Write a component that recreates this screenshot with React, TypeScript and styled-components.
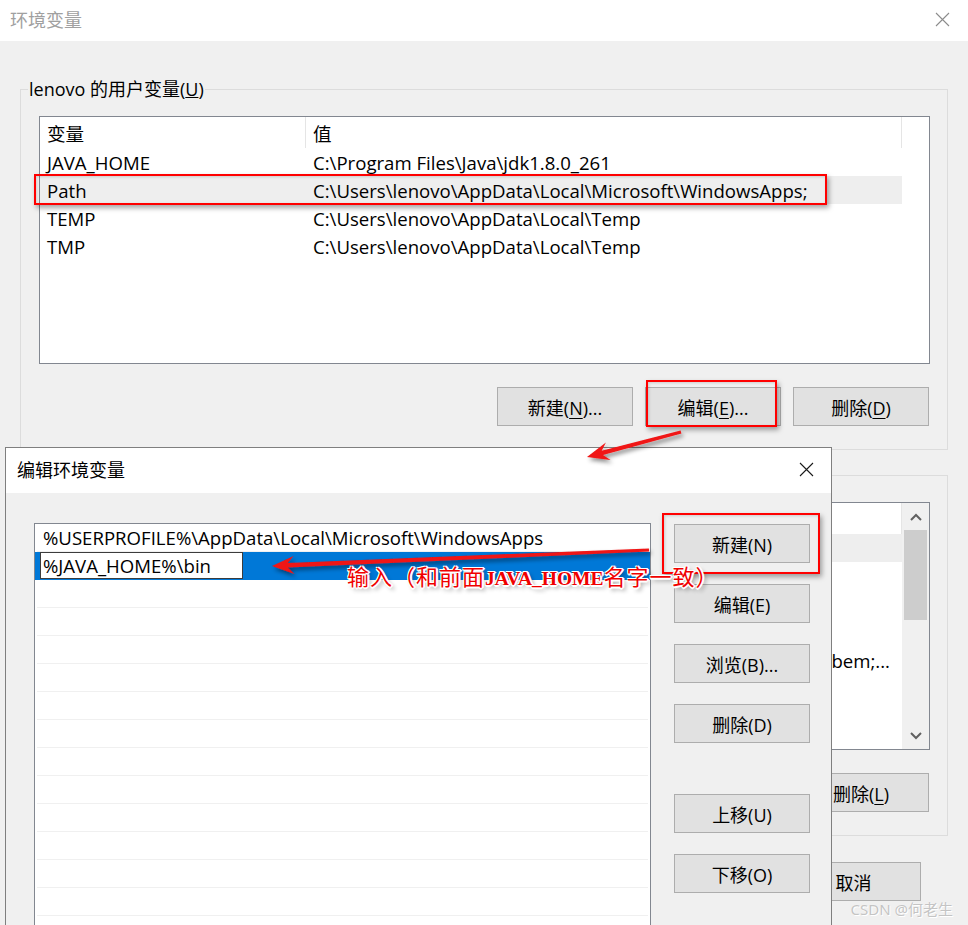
import styled, { createGlobalStyle } from 'styled-components';

const GlobalStyle = createGlobalStyle`
  html, body {
    margin: 0;
    padding: 0;
  }
  body {
    background: #f0f0f0;
    font-family: "Open Sans", "Noto Sans CJK SC", sans-serif;
    color: #000;
  }
`;

type Row = { name: string; value: string; selected?: boolean; alignEnd?: boolean };

const userVars: Row[] = [
  { name: 'JAVA_HOME', value: 'C:\\Program Files\\Java\\jdk1.8.0_261' },
  { name: 'Path', value: 'C:\\Users\\lenovo\\AppData\\Local\\Microsoft\\WindowsApps;', selected: true },
  { name: 'TEMP', value: 'C:\\Users\\lenovo\\AppData\\Local\\Temp' },
  { name: 'TMP', value: 'C:\\Users\\lenovo\\AppData\\Local\\Temp' },
];

const systemVars: Row[] = [
  { name: 'ComSpec', value: 'C:\\Windows\\system32\\cmd.exe', selected: true },
  { name: 'DriverData', value: 'C:\\Windows\\System32\\Drivers\\DriverData' },
  { name: 'NUMBER_OF_PROCESSORS', value: '8' },
  { name: 'OS', value: 'Windows_NT' },
  { name: 'Path', value: 'C:\\Windows\\system32;C:\\Windows;C:\\Windows\\System32\\Wbem;...', alignEnd: true },
  { name: 'PATHEXT', value: '.COM;.EXE;.BAT;.CMD;.VBS;.VBE;.JS;.JSE;.WSF;.WSH;.MSC' },
  { name: 'PROCESSOR_ARCHITECTURE', value: 'AMD64' },
  { name: 'PROCESSOR_IDENTIFIER', value: 'Intel64 Family 6 Model 142 Stepping 10' },
];

const pathEntries = ['%USERPROFILE%\\AppData\\Local\\Microsoft\\WindowsApps'];

const Page = styled.div`
  position: relative;
  width: 968px;
  height: 925px;
  overflow: hidden;
  font-size: 18.6px;
`;

const Window = styled.div`
  display: flex;
  flex-direction: column;
  height: 100%;
`;

const TitleBar = styled.div<{ $height: number; $left: number; $right: number; $inactive?: boolean }>`
  flex: none;
  height: ${(p) => p.$height}px;
  box-sizing: border-box;
  display: flex;
  align-items: center;
  justify-content: space-between;
  padding: 0 ${(p) => p.$right}px 3px ${(p) => p.$left}px;
  background: #fff;
  color: ${(p) => (p.$inactive ? '#a0a0a0' : '#000')};
  font-size: 18px;
`;

const CloseIcon = ({ color }: { color: string }) => (
  <svg width="15" height="15" viewBox="0 0 15 15">
    <path d="M1 1 L14 14 M14 1 L1 14" stroke={color} strokeWidth="1.1" fill="none" />
  </svg>
);

const Body = styled.div`
  flex: 1;
  display: flex;
  flex-direction: column;
  padding: 0 20px;
`;

const GroupBox = styled.div<{ $top: number }>`
  position: relative;
  margin-top: ${(p) => p.$top}px;
  border: 1px solid #dcdcdc;
  padding: 26px 17px 23px 18px;
  display: flex;
  flex-direction: column;
  gap: 23px;
`;

const Legend = styled.span`
  position: absolute;
  top: -13px;
  left: 7px;
  padding: 0 1px;
  background: #f0f0f0;
  line-height: 24px;
  font-size: 18px;
`;

const ListBox = styled.div`
  height: 248px;
  box-sizing: border-box;
  border: 1px solid #828790;
  background: #fff;
  display: flex;
  overflow: hidden;
`;

const Columns = styled.div`
  flex: 1;
  display: flex;
  flex-direction: column;
  min-width: 0;
`;

const HeaderRow = styled.div`
  display: grid;
  grid-template-columns: 266px 596px 1fr;
  height: 31px;
  flex: none;
`;

const HeaderCell = styled.div<{ $divider?: boolean }>`
  display: flex;
  align-items: center;
  padding-left: 7px;
  border-right: ${(p) => (p.$divider ? '1px solid #e5e5e5' : 'none')};
`;

const DataRow = styled.div<{ $selected?: boolean }>`
  display: grid;
  grid-template-columns: 266px 596px;
  width: 862px;
  height: 28px;
  flex: none;
  background: ${(p) => (p.$selected ? '#eeeeee' : 'transparent')};
`;

const Cell = styled.div<{ $alignEnd?: boolean }>`
  display: flex;
  align-items: center;
  justify-content: ${(p) => (p.$alignEnd ? 'flex-end' : 'flex-start')};
  padding: 0 ${(p) => (p.$alignEnd ? '12px' : '0')} 0 7px;
  white-space: nowrap;
  overflow: hidden;
`;

const ScrollBar = styled.div`
  width: 27px;
  flex: none;
  display: flex;
  flex-direction: column;
  align-items: center;
  background: #f0f0f0;
`;

const ScrollArrow = styled.div`
  height: 27px;
  width: 100%;
  display: flex;
  align-items: center;
  justify-content: center;
  flex: none;
`;

const ScrollThumb = styled.div`
  width: 23px;
  height: 90px;
  background: #cdcdcd;
  flex: none;
`;

const ScrollTrack = styled.div`
  flex: 1;
`;

const Chevron = ({ up }: { up?: boolean }) => (
  <svg width="12" height="8" viewBox="0 0 12 8">
    <path
      d={up ? 'M1 7 L6 2 L11 7' : 'M1 1 L6 6 L11 1'}
      stroke="#606060"
      strokeWidth="2"
      fill="none"
    />
  </svg>
);

const ButtonRow = styled.div<{ $right?: number }>`
  display: flex;
  justify-content: flex-end;
  gap: 12px;
  padding-right: ${(p) => p.$right ?? 1}px;
`;

const Button = styled.button<{ $width?: number }>`
  width: ${(p) => p.$width ?? 136}px;
  height: 39px;
  box-sizing: border-box;
  padding: 0;
  border: 1px solid #adadad;
  background: #e1e1e1;
  color: #000;
  font-family: inherit;
  font-size: 18px;
  flex: none;

  & u {
    text-decoration-thickness: 1px;
    text-underline-offset: 3px;
  }
`;

const Footer = styled(ButtonRow)`
  margin-top: 26px;
`;

const EditDialog = styled.div`
  position: absolute;
  left: 5px;
  top: 447px;
  width: 827px;
  height: 520px;
  box-sizing: border-box;
  border: 1px solid #7f7f7f;
  background: #f0f0f0;
  display: flex;
  flex-direction: column;
`;

const EditBody = styled.div`
  display: flex;
  gap: 23px;
  padding: 30px 21px 0 28px;
`;

const EditList = styled.div`
  width: 617px;
  height: 440px;
  box-sizing: border-box;
  border: 1px solid #828790;
  background: #fff;
  display: flex;
  flex-direction: column;
  flex: none;
`;

const EditRow = styled.div<{ $selected?: boolean }>`
  height: 28px;
  box-sizing: border-box;
  flex: none;
  display: flex;
  align-items: center;
  margin: 0 ${(p) => (p.$selected ? 0 : 2)}px;
  padding-left: ${(p) => (p.$selected ? 5 : 6)}px;
  background: ${(p) => (p.$selected ? '#0078d7' : 'transparent')};
  border-bottom: 1px solid ${(p) => (p.$selected ? '#0078d7' : '#f0f0f0')};
  white-space: nowrap;
`;

const EditInput = styled.input`
  width: 203px;
  height: 27px;
  box-sizing: border-box;
  margin: 0;
  border: 1px solid #3c3c3c;
  padding: 0 0 0 2px;
  background: #fff;
  font-family: inherit;
  font-size: 18.6px;
  color: #000;
  outline: none;
`;

const ButtonColumn = styled.div`
  display: flex;
  flex-direction: column;
  gap: 51px;
  padding-top: 1px;
`;

const ButtonStack = styled.div`
  display: flex;
  flex-direction: column;
  gap: 21px;
`;

const RedBox = styled.div<{ $x: number; $y: number; $w: number; $h: number }>`
  position: absolute;
  left: ${(p) => p.$x}px;
  top: ${(p) => p.$y}px;
  width: ${(p) => p.$w}px;
  height: ${(p) => p.$h}px;
  box-sizing: border-box;
  border: 2.5px solid #ff0000;
  box-shadow: 2px 3px 5px rgba(0, 0, 0, 0.35), inset 1px 1px 3px rgba(0, 0, 0, 0.15);
  pointer-events: none;
`;

const ArrowLayer = styled.svg`
  position: absolute;
  left: 0;
  top: 0;
  width: 968px;
  height: 925px;
  pointer-events: none;
`;

const Note = styled.div`
  position: absolute;
  left: 347px;
  top: 560px;
  font-family: "Noto Sans CJK SC", sans-serif;
  font-size: 22px;
  line-height: 30px;
  letter-spacing: 1px;
  color: #f00000;
  white-space: nowrap;
  text-shadow: 1px 1px 0 #fff, -1px -1px 0 #fff, 1px -1px 0 #fff, -1px 1px 0 #fff, 0 2px 0 #fff,
    2px 0 0 #fff, 3px 3px 4px rgba(0, 0, 0, 0.45);

  & b {
    font-family: "Liberation Serif", "DejaVu Serif", serif;
    font-weight: 700;
    font-size: 19.5px;
    letter-spacing: 0;
  }
`;

const Watermark = styled.div`
  position: absolute;
  right: 15px;
  bottom: 6px;
  font-family: "Noto Sans", "Noto Sans CJK SC", sans-serif;
  font-size: 15px;
  color: #c4c4c4;
  text-shadow: 0 0 1px #fff, 1px 1px 0 #fff;
  white-space: nowrap;
`;

// barbed arrow polygon from tail to tip
const arrowPoints = (x1: number, y1: number, x2: number, y2: number) => {
  const len = Math.hypot(x2 - x1, y2 - y1);
  const ux = (x2 - x1) / len;
  const uy = (y2 - y1) / len;
  const px = -uy;
  const py = ux;
  const head = 22;
  const half = 9;
  const shaft = 2.2;
  const tail = 1.6;
  const bx = x2 - ux * head;
  const by = y2 - uy * head;
  const nx = x2 - ux * head * 0.72;
  const ny = y2 - uy * head * 0.72;
  const pts = [
    [x2, y2],
    [bx + px * half, by + py * half],
    [nx + px * shaft, ny + py * shaft],
    [x1 + px * tail, y1 + py * tail],
    [x1 - px * tail, y1 - py * tail],
    [nx - px * shaft, ny - py * shaft],
    [bx - px * half, by - py * half],
  ];
  return pts.map(([x, y]) => `${x.toFixed(1)},${y.toFixed(1)}`).join(' ');
};

const VarList = ({ rows, scroll }: { rows: Row[]; scroll?: boolean }) => (
  <ListBox>
    <Columns>
      <HeaderRow>
        <HeaderCell $divider>变量</HeaderCell>
        <HeaderCell $divider>值</HeaderCell>
        <HeaderCell />
      </HeaderRow>
      {rows.map((r) => (
        <DataRow key={r.name} $selected={r.selected}>
          <Cell>{r.name}</Cell>
          <Cell $alignEnd={r.alignEnd}>{r.value}</Cell>
        </DataRow>
      ))}
    </Columns>
    {scroll && (
      <ScrollBar>
        <ScrollArrow>
          <Chevron up />
        </ScrollArrow>
        <ScrollThumb />
        <ScrollTrack />
        <ScrollArrow>
          <Chevron />
        </ScrollArrow>
      </ScrollBar>
    )}
  </ListBox>
);

export default function App() {
  const emptyRows = Array.from({ length: 14 }, (_, i) => i);
  return (
    <Page>
      <GlobalStyle />
      <Window>
        <TitleBar $height={41} $left={10} $right={18} $inactive>
          <span>环境变量</span>
          <CloseIcon color="#8c8c8c" />
        </TitleBar>
        <Body>
          <GroupBox $top={48}>
            <Legend>
              lenovo 的用户变量(<u>U</u>)
            </Legend>
            <VarList rows={userVars} />
            <ButtonRow>
              <Button>
                新建(<u>N</u>)...
              </Button>
              <Button>
                编辑(<u>E</u>)...
              </Button>
              <Button>
                删除(<u>D</u>)
              </Button>
            </ButtonRow>
          </GroupBox>
          <GroupBox $top={25}>
            <Legend>
              系统变量(<u>S</u>)
            </Legend>
            <VarList rows={systemVars} scroll />
            <ButtonRow>
              <Button>
                新建(<u>W</u>)...
              </Button>
              <Button>
                编辑(<u>I</u>)...
              </Button>
              <Button>
                删除(<u>L</u>)
              </Button>
            </ButtonRow>
          </GroupBox>
          <Footer $right={27}>
            <Button $width={135}>确定</Button>
            <Button $width={135}>取消</Button>
          </Footer>
        </Body>
      </Window>

      <EditDialog>
        <TitleBar $height={45} $left={11} $right={17}>
          <span>编辑环境变量</span>
          <CloseIcon color="#1a1a1a" />
        </TitleBar>
        <EditBody>
          <EditList>
            {pathEntries.map((p) => (
              <EditRow key={p}>{p}</EditRow>
            ))}
            <EditRow $selected>
              <EditInput readOnly value="%JAVA_HOME%\bin" />
            </EditRow>
            {emptyRows.map((i) => (
              <EditRow key={i} />
            ))}
          </EditList>
          <ButtonColumn>
            <ButtonStack>
              <Button>新建(N)</Button>
              <Button>编辑(E)</Button>
              <Button>浏览(B)...</Button>
              <Button>删除(D)</Button>
            </ButtonStack>
            <ButtonStack>
              <Button>上移(U)</Button>
              <Button>下移(O)</Button>
            </ButtonStack>
          </ButtonColumn>
        </EditBody>
      </EditDialog>

      <RedBox $x={34} $y={174} $w={793} $h={31} />
      <RedBox $x={646} $y={380} $w={131} $h={47} />
      <RedBox $x={662} $y={513} $w={158} $h={61} />

      <ArrowLayer viewBox="0 0 968 925">
        <defs>
          <filter id="arrowShadow" x="-10%" y="-50%" width="120%" height="200%">
            <feDropShadow dx="2" dy="3" stdDeviation="2" floodColor="#000" floodOpacity="0.45" />
          </filter>
        </defs>
        <polygon points={arrowPoints(649, 550, 272, 566)} fill="#f01414" filter="url(#arrowShadow)" />
        <polygon points={arrowPoints(681, 432, 587, 457)} fill="#f01414" filter="url(#arrowShadow)" />
      </ArrowLayer>

      <Note>
        输入（和前面<b>JAVA_HOME</b>名字一致）
      </Note>

      <Watermark>CSDN @何老生</Watermark>
    </Page>
  );
}
